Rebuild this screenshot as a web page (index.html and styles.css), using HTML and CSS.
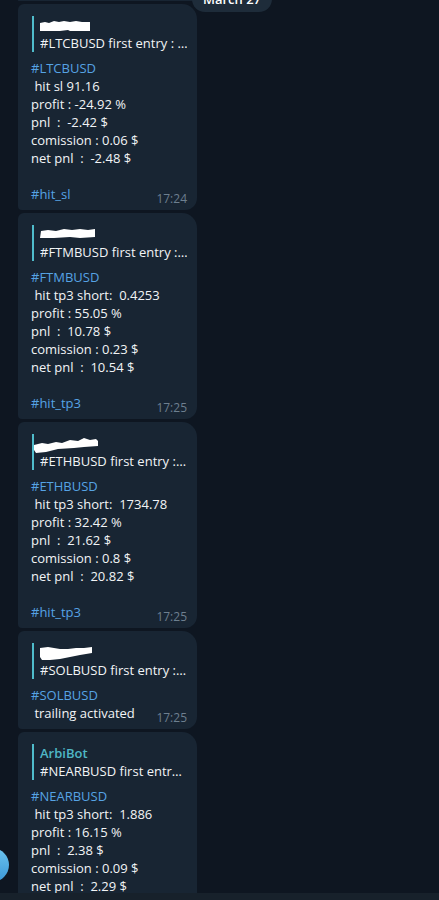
FILE: index.html
```html
<!DOCTYPE html>
<html>
<head>
<meta charset="utf-8">
<link rel="stylesheet" href="styles.css">
</head>
<body>
<div class="screen">
  <div class="chat">
    <div class="date-pill">March 27</div>
    <div class="avatar"></div>
    <div class="feed">
      <div class="bubble bubble-prev"></div>

      <div class="bubble">
        <div class="quote">
          <div class="quote-name"><svg class="redact" width="60" height="18" viewBox="0 0 60 18"><path d="M0 7 L5 6 L9 7 L14 5 L19 6 L24 5 L30 6 L36 5 L42 6 L50 6 L50 15 L30 15 L28 14 L20 15 L0 15 Z" fill="#fff"/></svg></div>
          <div class="quote-text">#LTCBUSD first entry : …</div>
        </div>
        <div class="body">
          <div class="line tag">#LTCBUSD</div>
          <div class="line"> hit sl 91.16</div>
          <div class="line">profit : -24.92 %</div>
          <div class="line">pnl  :  -2.42 $</div>
          <div class="line">comission : 0.06 $</div>
          <div class="line">net pnl  :  -2.48 $</div>
          <div class="line"></div>
          <div class="line tag">#hit_sl</div>
        </div>
        <span class="time">17:24</span>
      </div>

      <div class="bubble">
        <div class="quote">
          <div class="quote-name"><svg class="redact" width="60" height="18" viewBox="0 0 60 18"><path d="M1 6 L8 5 L16 6 L24 4 L32 5 L40 4 L48 5 L55 4 L55 12 L40 13 L30 12 L14 13 L0 13 Z" fill="#fff"/></svg></div>
          <div class="quote-text">#FTMBUSD first entry :…</div>
        </div>
        <div class="body">
          <div class="line tag">#FTMBUSD</div>
          <div class="line"> hit tp3 short:  0.4253</div>
          <div class="line">profit : 55.05 %</div>
          <div class="line">pnl  :  10.78 $</div>
          <div class="line">comission : 0.23 $</div>
          <div class="line">net pnl  :  10.54 $</div>
          <div class="line"></div>
          <div class="line tag">#hit_tp3</div>
        </div>
        <span class="time">17:25</span>
      </div>

      <div class="bubble">
        <div class="quote">
          <div class="quote-name"><svg class="redact redact-wide" width="66" height="20" viewBox="0 0 66 20"><path d="M0 11 L8 9 L14 10 L22 8 L28 9 L36 6 L44 7 L50 4 L56 6 L62 5 L64 7 L64 12 L50 13 L40 14 L24 15 L12 18 L2 19 L0 16 Z" fill="#fff"/></svg></div>
          <div class="quote-text">#ETHBUSD first entry :…</div>
        </div>
        <div class="body">
          <div class="line tag">#ETHBUSD</div>
          <div class="line"> hit tp3 short:  1734.78</div>
          <div class="line">profit : 32.42 %</div>
          <div class="line">pnl  :  21.62 $</div>
          <div class="line">comission : 0.8 $</div>
          <div class="line">net pnl  :  20.82 $</div>
          <div class="line"></div>
          <div class="line tag">#hit_tp3</div>
        </div>
        <span class="time">17:25</span>
      </div>

      <div class="bubble">
        <div class="quote">
          <div class="quote-name"><svg class="redact" width="60" height="20" viewBox="0 0 60 20"><path d="M0 5 L8 4 L14 5 L20 6 L28 6 L36 5 L44 5 L52 4 L52 10 L46 11 L40 12 L30 14 L20 16 L10 17 L2 17 L0 14 Z" fill="#fff"/></svg></div>
          <div class="quote-text">#SOLBUSD first entry :…</div>
        </div>
        <div class="body">
          <div class="line tag">#SOLBUSD</div>
          <div class="line"> trailing activated</div>
        </div>
        <span class="time">17:25</span>
      </div>

      <div class="bubble">
        <div class="quote">
          <div class="quote-name bot">ArbiBot</div>
          <div class="quote-text">#NEARBUSD first entr…</div>
        </div>
        <div class="body">
          <div class="line tag">#NEARBUSD</div>
          <div class="line"> hit tp3 short:  1.886</div>
          <div class="line">profit : 16.15 %</div>
          <div class="line">pnl  :  2.38 $</div>
          <div class="line">comission : 0.09 $</div>
          <div class="line">net pnl  :  2.29 $</div>
          <div class="line"></div>
          <div class="line tag">#hit_tp3</div>
        </div>
        <span class="time">17:25</span>
      </div>
    </div>
  </div>
  <div class="composer"></div>
</div>
</body>
</html>
```

FILE: styles.css
```css
html, body {
  margin: 0;
  padding: 0;
  background: #0e1621;
}

.screen {
  width: 439px;
  height: 900px;
  display: flex;
  flex-direction: column;
  overflow: hidden;
  font-family: "Open Sans", "Liberation Sans", sans-serif;
  font-size: 13px;
  color: #f2f4f6;
}

.chat {
  position: relative;
  flex: 1;
  overflow: hidden;
}

.feed {
  display: flex;
  flex-direction: column;
  gap: 3px;
  padding-left: 18px;
}

.bubble {
  position: relative;
  width: 179px;
  box-sizing: border-box;
  background: #182533;
  border-radius: 6px 15px 12px 4px;
  padding: 12px 10px 7px 13px;
}

.bubble-prev {
  height: 1px;
  padding: 0;
  border-radius: 0 0 10px 4px;
}

.quote {
  border-left: 2px solid #4fbccb;
  margin-left: 1px;
  padding-left: 6px;
  margin-bottom: 7px;
}

.quote-name {
  height: 18px;
  line-height: 18px;
}

.quote-name.bot {
  color: #4fb7c6;
  font-weight: 600;
}

.redact {
  display: block;
  overflow: visible;
}

.redact-wide {
  margin-left: -6px;
}

.quote-text {
  height: 18px;
  line-height: 18px;
  white-space: nowrap;
  overflow: hidden;
}

.line {
  height: 18px;
  line-height: 18px;
  white-space: pre;
}

.tag {
  color: #56a3e4;
}

.time {
  position: absolute;
  right: 10px;
  bottom: 4px;
  font-size: 12px;
  line-height: 14px;
  color: #6d7f8f;
}

.date-pill {
  position: absolute;
  left: 192px;
  top: -14px;
  width: 80px;
  height: 26px;
  line-height: 26px;
  text-align: center;
  border-radius: 13px;
  background: #1e2c3a;
  color: #ffffff;
  font-weight: 600;
  font-size: 13px;
  z-index: 2;
}

.avatar {
  position: absolute;
  left: -25px;
  top: 848px;
  width: 34px;
  height: 34px;
  border-radius: 50%;
  background: linear-gradient(180deg, #6cc4ef 0%, #3b97d7 100%);
}

.composer {
  height: 7px;
  flex: none;
  background: #17212b;
}
```
